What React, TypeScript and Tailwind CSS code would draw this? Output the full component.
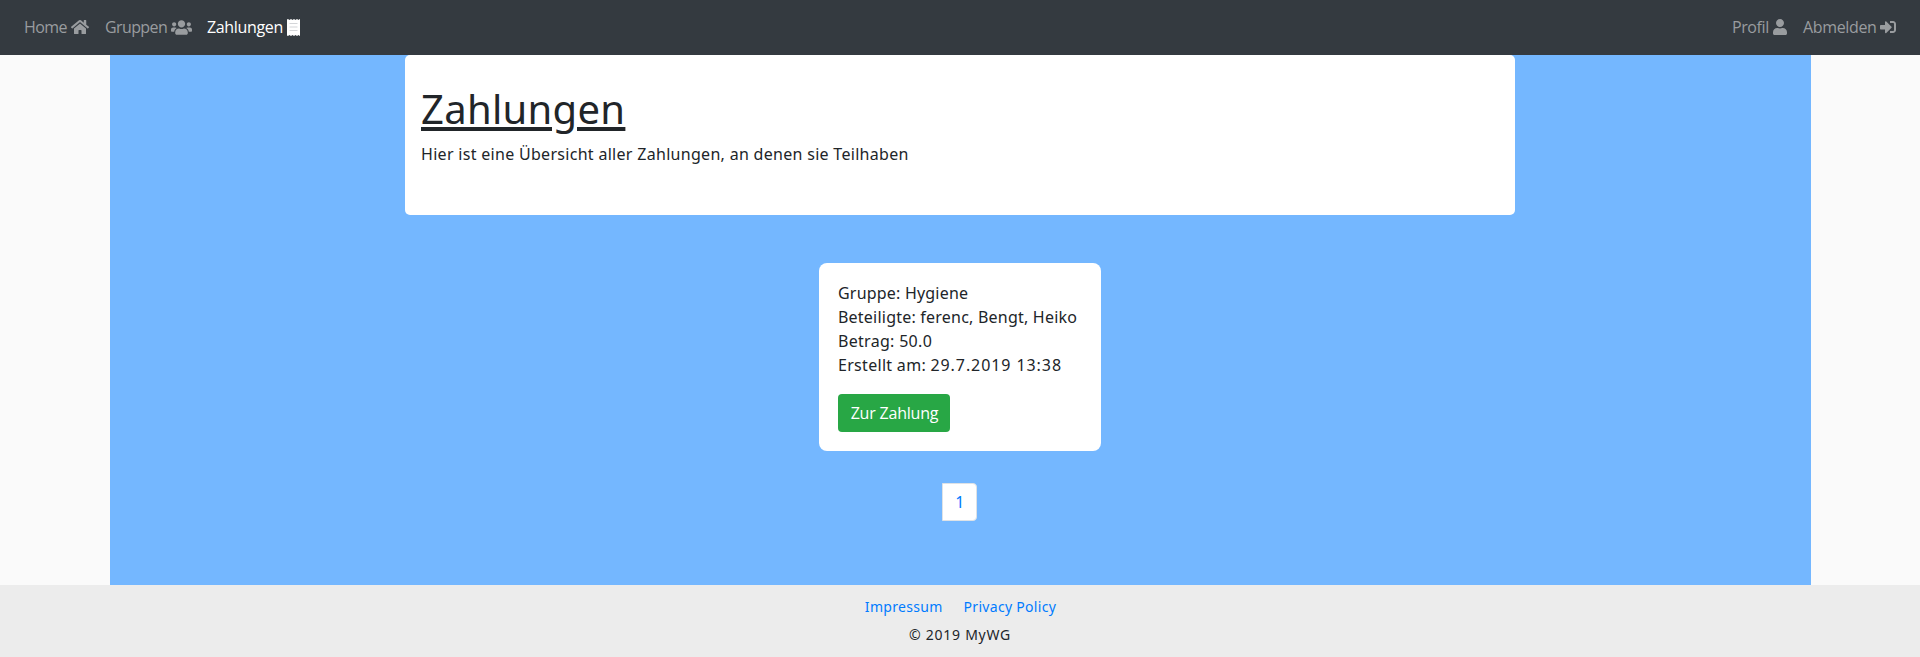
import { FaHome, FaUsers, FaUser, FaSignInAlt } from "react-icons/fa";

function ReceiptIcon() {
  return (
    <svg viewBox="0 0 13 17" className="h-[17px] w-[13px]" aria-hidden="true">
      <path
        fill="#fff"
        d="M0 .6 1 0 2.4 1 4 0l1.5 1L7 0l1.5 1L10 0l1.5 1L12.6 0l.4.6v15.8l-.4.6-1.1-1-1.5 1-1.5-1L7 17l-1.5-1L4 17l-1.6-1L1 17l-1-.6z"
      />
      <path stroke="#d3d5d8" d="M2.5 4.5h8M2.5 8h8M2.5 11.5h8" />
    </svg>
  );
}

export default function App() {
  return (
    <div className="flex h-[657px] w-full flex-col whitespace-nowrap bg-[#fafafa] font-['Noto_Sans',sans-serif] text-base tracking-[0.3px] text-[#212529]">
      <nav className="flex h-[55px] shrink-0 items-center justify-between bg-[#343a40] px-6 font-['Open_Sans',sans-serif] text-[#999c9f]">
        <div className="flex items-center gap-4 pb-px">
          <a className="flex items-center gap-1">
            <span className="w-[43px] tracking-[-0.6px]">Home</span>
            <FaHome size={18} />
          </a>
          <a className="flex items-center gap-1">
            <span className="w-[62px] tracking-[-0.6px]">Gruppen</span>
            <FaUsers size={21} className="-mr-px" />
          </a>
          <a className="flex items-center gap-1 text-white">
            <span className="w-[76px] tracking-[-0.35px]">Zahlungen</span>
            <ReceiptIcon />
          </a>
        </div>
        <div className="flex items-center gap-[15px] pb-px">
          <a className="flex items-center gap-1">
            <span className="w-9 tracking-[-0.4px]">Profil</span>
            <FaUser size={16} />
          </a>
          <a className="flex items-center gap-1">
            <span className="w-[73px] tracking-[-0.35px]">Abmelden</span>
            <FaSignInAlt size={16} />
          </a>
        </div>
      </nav>

      <main className="mx-auto flex h-[530px] w-[1701px] shrink-0 flex-col items-center bg-[#74b7ff]">
        <header className="h-40 w-[1110px] rounded-[5px] bg-white px-4 pt-[30px]">
          <h1 className="mb-[9px] text-[40px] leading-[48px] tracking-[0.3px] underline decoration-[4px] underline-offset-[3px]">
            Zahlungen
          </h1>
          <p className="leading-6">Hier ist eine Übersicht aller Zahlungen, an denen sie Teilhaben</p>
        </header>

        <section className="mt-12 h-[188px] w-[282px] rounded-[8px] bg-white px-[19px] pt-[18px] leading-6">
          <p className="tracking-[0.2px]">Gruppe: Hygiene</p>
          <p className="tracking-[0.22px]">Beteiligte: ferenc, Bengt, Heiko</p>
          <p className="tracking-[0.3px]">Betrag: 50.0</p>
          <p>
            Erstellt am: <span className="tracking-[0.92px]">29.7.2019 13:38</span>
          </p>
          <button className="mt-[17px] flex h-[38px] w-28 items-center justify-center rounded-[4px] bg-[#28a745] pl-px font-['Open_Sans',sans-serif] tracking-[-0.2px] text-white">
            Zur Zahlung
          </button>
        </section>

        <a className="mt-8 mr-px flex h-[38px] w-[35px] items-center justify-center rounded-r-[4px] border border-[#dee2e6] bg-white pl-px text-[#007bff]">
          1
        </a>
      </main>

      <footer className="flex h-[72px] shrink-0 flex-col items-center bg-[#ececec] pt-3 text-sm">
        <div className="flex gap-[21px] pl-px leading-5 text-[#007bff]">
          <a>Impressum</a>
          <a>Privacy Policy</a>
        </div>
        <p className="mt-2 leading-5 tracking-[0.75px]">© 2019 MyWG</p>
      </footer>
    </div>
  );
}
